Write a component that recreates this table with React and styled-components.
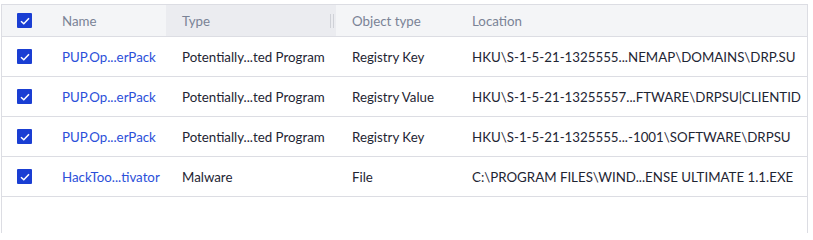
import React from 'react';
import styled, {createGlobalStyle} from 'styled-components';

const rows = [
	{name: 'PUP.Op...erPack', type: 'Potentially...ted Program', objectType: 'Registry Key', location: 'HKU\\S-1-5-21-1325555...NEMAP\\DOMAINS\\DRP.SU'},
	{name: 'PUP.Op...erPack', type: 'Potentially...ted Program', objectType: 'Registry Value', location: 'HKU\\S-1-5-21-13255557...FTWARE\\DRPSU|CLIENTID'},
	{name: 'PUP.Op...erPack', type: 'Potentially...ted Program', objectType: 'Registry Key', location: 'HKU\\S-1-5-21-1325555...-1001\\SOFTWARE\\DRPSU'},
	{name: 'HackToo...tivator', type: 'Malware', objectType: 'File', location: 'C:\\PROGRAM FILES\\WIND...ENSE ULTIMATE 1.1.EXE'},
];

const GlobalStyle = createGlobalStyle`
	body {
		margin: 0;
		background: #ffffff;
		font-family: Lato, "Open Sans", sans-serif;
	}
`;

const COLS = '44px 120px 170px 120px 1fr';

function Checkbox() {
	return (
		<Box>
			<svg width="10" height="8" viewBox="0 0 10 8">
				<path d="M1 4.2 L3.8 6.8 L9 1.2" fill="none" stroke="#fff" strokeWidth="1.5" />
			</svg>
		</Box>
	);
}

export default function App() {
	return (
		<>
			<GlobalStyle />
			<Frame>
				<HeaderRow>
					<CheckCell><Checkbox /></CheckCell>
					<HeadCell>Name</HeadCell>
					<HeadCell sorted>
						Type
						<Grip />
					</HeadCell>
					<HeadCell>Object type</HeadCell>
					<HeadCell>Location</HeadCell>
				</HeaderRow>
				{rows.map((r, i) => (
					<Row key={i}>
						<CheckCell><Checkbox /></CheckCell>
						<Cell><NameLink>{r.name}</NameLink></Cell>
						<Cell>{r.type}</Cell>
						<Cell>{r.objectType}</Cell>
						<Cell>{r.location}</Cell>
					</Row>
				))}
			</Frame>
		</>
	);
}

const Frame = styled.div`
	margin: 4px 5px 0 1px;
	height: 229px;
	border: 1px solid #dcdde3;
	border-bottom: none;
	box-sizing: border-box;
	background: #fff;
`;

const HeaderRow = styled.div`
	display: grid;
	grid-template-columns: ${COLS};
	height: 32px;
	background: #f4f5f7;
	border-bottom: 1px solid #dcdde3;
	box-sizing: border-box;
`;

const Row = styled.div`
	display: grid;
	grid-template-columns: ${COLS};
	height: 40px;
	border-bottom: 1px solid #dcdde3;
	box-sizing: border-box;
`;

const CheckCell = styled.div`
	display: flex;
	align-items: center;
	padding-left: 15px;
`;

const Box = styled.span`
	width: 15px;
	height: 15px;
	background: #1a3ed3;
	border-radius: 1px;
	display: flex;
	align-items: center;
	justify-content: center;
`;

const HeadCell = styled.div`
	position: relative;
	display: flex;
	align-items: center;
	padding-left: 16px;
	font-size: 13.3px;
	color: #7a8396;
	background: ${props => (props.sorted ? '#ebecf0' : 'transparent')};
`;

const Grip = styled.span`
	position: absolute;
	right: 2px;
	top: 9px;
	width: 4px;
	height: 14px;
	border-left: 1px solid #cfd1d7;
	border-right: 1px solid #cfd1d7;
	box-sizing: border-box;
`;

const Cell = styled.div`
	display: flex;
	align-items: center;
	padding-left: 16px;
	font-size: 13.3px;
	color: #1e2533;
	white-space: nowrap;
	overflow: hidden;
`;

const NameLink = styled.span`
	color: #2b4fd9;
	cursor: pointer;
`;
